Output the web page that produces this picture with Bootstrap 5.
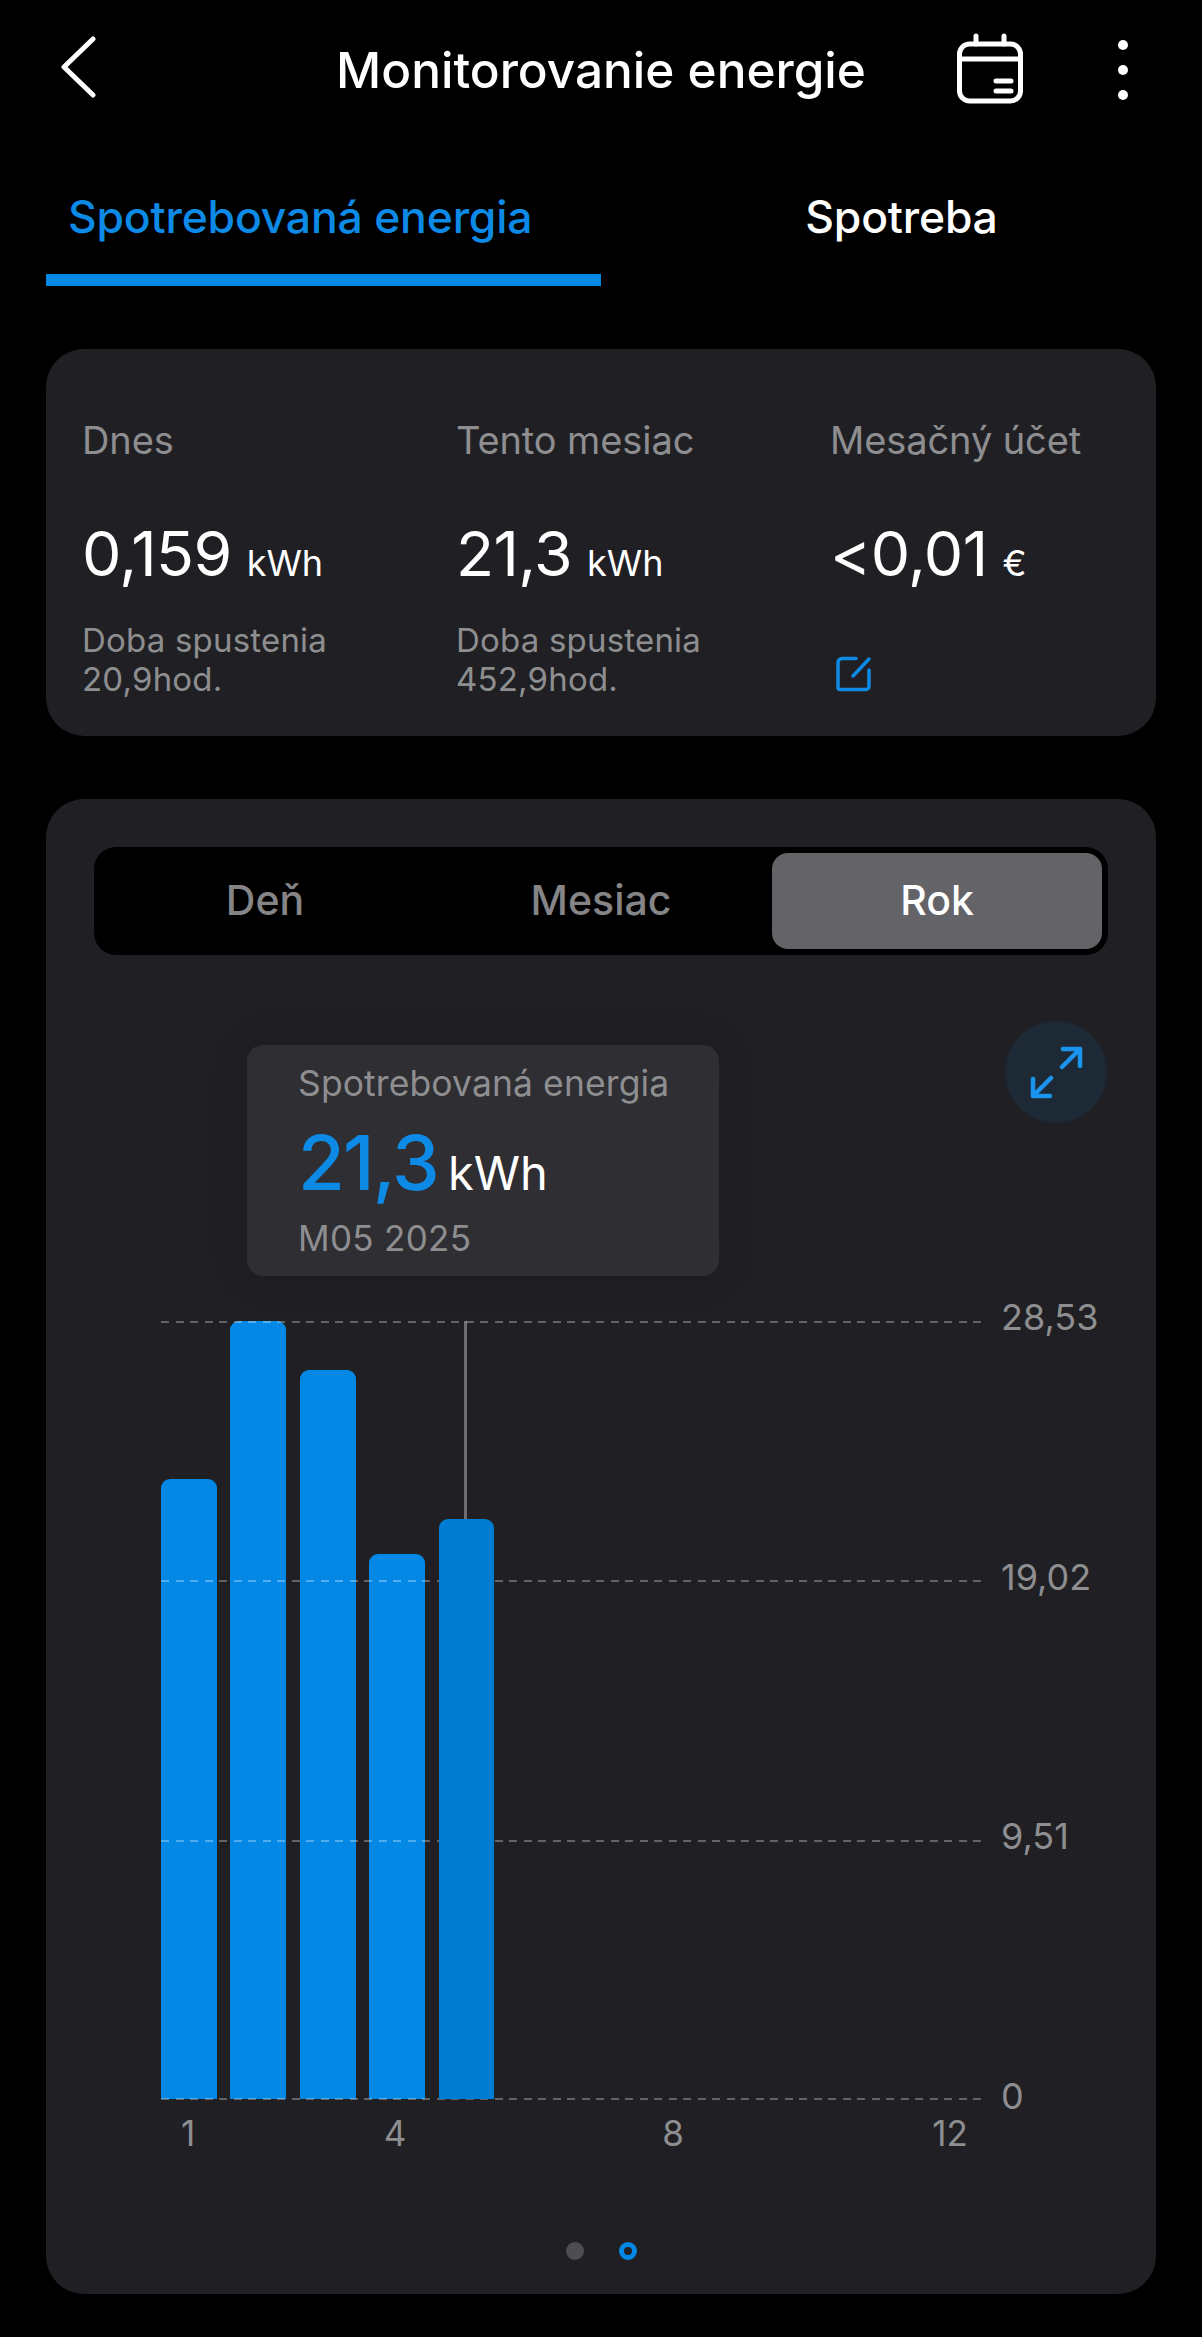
<!DOCTYPE html>
<html lang="sk">
<head>
<meta charset="utf-8">
<title>Monitorovanie energie</title>
<link href="https://cdn.jsdelivr.net/npm/bootstrap@5.3.0/dist/css/bootstrap.min.css" rel="stylesheet">
<style>
html,body{background:#000;margin:0}
body{width:1202px;height:2337px;overflow:hidden;font-family:Inter,"Liberation Sans",sans-serif;color:#fff}
.topbar{height:140px;padding:0 46px}
.topbar-title{position:absolute;left:0;right:0;top:36px;text-align:center;font-size:49.500px;line-height:68px;font-weight:500}
.topbar-wrap{position:relative}
.back-ico{position:absolute;left:60px;top:36px}
.cal-ico{position:absolute;left:956px;top:33px}
.kebab-ico{position:absolute;left:1116px;top:38px}
.tabs-row{height:146px;padding:0 0 0 46px}
.tab-a{width:555px;height:146px;border-bottom:12px solid #0488e6;color:#0d8ae6;padding:51px 0 0 22px;font-size:44.500px;line-height:52px;font-weight:500;letter-spacing:-.2px}
.tab-b{flex:1;text-align:center;padding-top:51px;font-size:44.500px;line-height:52px;font-weight:500;letter-spacing:-.2px}
.panel-a,.panel-b{background:#202024;border-radius:38px;margin:0 46px}
.panel-a{height:387px;margin-top:63px;padding:66px 0 0 36px;display:grid;grid-template-columns:374px 374px 1fr}
.panel-b{height:1495px;margin-top:63px;padding:48px 48px 0;position:relative}
.stat-label{font-size:38px;line-height:50px;color:#8e8e91;letter-spacing:-.1px}
.stat-val{font-size:62.500px;line-height:66px;margin-top:55px;font-weight:400;letter-spacing:-.6px}
.stat-unit{font-size:36px;margin-left:15px;letter-spacing:0}
.stat-sub{font-size:33px;line-height:39px;color:#8e8e91;margin-top:25px;letter-spacing:.2px}
.edit-ico{display:block;margin:60px 0 0 6px}
.seg-box{background:#000;border-radius:22px;height:108px;padding:6px;display:grid;grid-template-columns:330px 342px 330px}
.seg-item{display:flex;align-items:center;justify-content:center;font-size:41px;font-weight:500;color:#858587;border-radius:16px}
.seg-on{background:#636368;color:#fff}
.expand-btn{position:absolute;left:959px;top:222px;width:102px;height:102px;border-radius:50%;background:#1d2a36;display:flex;align-items:center;justify-content:center}
.tip-box{position:absolute;left:201px;top:246px;width:472px;height:231px;background:#2e2e33;border-radius:16px;padding:16px 0 0 51px;box-shadow:0 0 40px rgba(0,0,0,.14);z-index:3}
.tip-title{font-size:35.500px;line-height:46px;color:#8e8e91;letter-spacing:.1px}
.tip-val{font-size:76px;line-height:84px;margin-top:13px;color:#0d8ae6;font-weight:500;letter-spacing:-1.8px}
.tip-unit{font-size:47px;color:#fff;margin-left:10px;font-weight:400;letter-spacing:0}
.tip-date{font-size:35px;line-height:46px;color:#8e8e91;margin-top:0;letter-spacing:.3px}
.plot-zone{position:absolute;left:115px;top:522px;width:823px;height:778px}
.plot-bars{position:absolute;inset:0;display:flex;align-items:flex-end;gap:13.6px}
.plot-bar{width:55.800px;background:#0488e6;border-radius:9px 9px 0 0}
.plot-bar-on{background:#007dd3;position:relative;z-index:2}
.grid-line{position:absolute;left:0;right:0;height:2px;z-index:1;background:repeating-linear-gradient(90deg,rgba(255,255,255,.3) 0 8px,transparent 8px 14.500px)}
.grid-top{top:0}.grid-2{top:259px}.grid-3{top:519px}.grid-4{top:777px}
.cursor-line{position:absolute;left:303px;top:0;height:198px;width:3px;background:#6e6e72}
.y-tick{position:absolute;left:955px;font-size:36px;line-height:40px;color:#8e8e91}
.x-tick{position:absolute;top:1314px;font-size:35px;line-height:40px;color:#8e8e91;width:60px;text-align:center}
.pager{position:absolute;left:0;right:0;top:1443px;display:flex;justify-content:center;gap:35px}
.dot-a{width:18px;height:18px;border-radius:50%;background:#4d4d52}
.dot-b{width:18px;height:18px;border-radius:50%;border:5px solid #0488e6}
</style>
</head>
<body>
<div class="topbar-wrap topbar">
  <svg class="back-ico" width="36" height="62" viewBox="0 0 36 62" fill="none" stroke="#fff" stroke-width="5" stroke-linecap="round" stroke-linejoin="round"><path d="M33 3 4 31l29 28"/></svg>
  <div class="topbar-title">Monitorovanie energie</div>
  <svg class="cal-ico" width="68" height="72" viewBox="0 0 68 72" fill="none" stroke="#fff" stroke-width="5" stroke-linecap="round"><rect x="3.500" y="11" width="61" height="57" rx="10"/><path d="M3.500 26h61M20 3v8M48 3v8M40 48h15M40 58h15"/></svg>
  <svg class="kebab-ico" width="14" height="64" viewBox="0 0 14 64" fill="#fff"><circle cx="7" cy="7" r="5"/><circle cx="7" cy="32" r="5"/><circle cx="7" cy="57" r="5"/></svg>
</div>
<div class="tabs-row d-flex">
  <div class="tab-a">Spotrebovaná energia</div>
  <div class="tab-b">Spotreba</div>
</div>
<section class="panel-a">
  <div>
    <div class="stat-label">Dnes</div>
    <div class="stat-val">0,159<span class="stat-unit">kWh</span></div>
    <div class="stat-sub">Doba spustenia<br>20,9hod.</div>
  </div>
  <div>
    <div class="stat-label">Tento mesiac</div>
    <div class="stat-val">21,3<span class="stat-unit">kWh</span></div>
    <div class="stat-sub">Doba spustenia<br>452,9hod.</div>
  </div>
  <div>
    <div class="stat-label">Mesačný účet</div>
    <div class="stat-val">&lt;0,01<span class="stat-unit">€</span></div>
    <svg class="edit-ico" width="36" height="36" viewBox="0 0 36 36" fill="none" stroke="#0d8ae6" stroke-width="3.500" stroke-linecap="round" stroke-linejoin="round"><path d="M20 2.500H6a4 4 0 0 0-4 4v25a2 2 0 0 0 2 2h26a3 3 0 0 0 3-3V14M33 3 17 20"/></svg>
  </div>
</section>
<section class="panel-b">
  <div class="seg-box">
    <div class="seg-item">Deň</div>
    <div class="seg-item">Mesiac</div>
    <div class="seg-item seg-on">Rok</div>
  </div>
  <div class="expand-btn">
    <svg width="53" height="53" viewBox="0 0 53 53" fill="none" stroke="#1a94ee" stroke-width="4.500" stroke-linecap="round" stroke-linejoin="round"><path d="M33 3h17v17M50 3 32 21M3 33v17h17M3 50l18-18"/></svg>
  </div>
  <div class="tip-box">
    <div class="tip-title">Spotrebovaná energia</div>
    <div class="tip-val">21,3<span class="tip-unit">kWh</span></div>
    <div class="tip-date">M05 2025</div>
  </div>
  <div class="plot-zone">
    <div class="plot-bars">
      <div class="plot-bar" style="height:620px"></div>
      <div class="plot-bar" style="height:778px"></div>
      <div class="plot-bar" style="height:729px"></div>
      <div class="plot-bar" style="height:545px"></div>
      <div class="plot-bar plot-bar-on" style="height:580px"></div>
    </div>
    <div class="cursor-line"></div>
    <div class="grid-line grid-top"></div>
    <div class="grid-line grid-2"></div>
    <div class="grid-line grid-3"></div>
    <div class="grid-line grid-4"></div>
  </div>
  <div class="y-tick" style="top:498px">28,53</div>
  <div class="y-tick" style="top:758px">19,02</div>
  <div class="y-tick" style="top:1017px">9,51</div>
  <div class="y-tick" style="top:1277px">0</div>
  <div class="x-tick" style="left:112px">1</div>
  <div class="x-tick" style="left:319px">4</div>
  <div class="x-tick" style="left:597px">8</div>
  <div class="x-tick" style="left:874px">12</div>
  <div class="pager"><span class="dot-a"></span><span class="dot-b"></span></div>
</section>
<script src="https://cdn.jsdelivr.net/npm/bootstrap@5.3.0/dist/js/bootstrap.bundle.min.js"></script>
</body>
</html>
